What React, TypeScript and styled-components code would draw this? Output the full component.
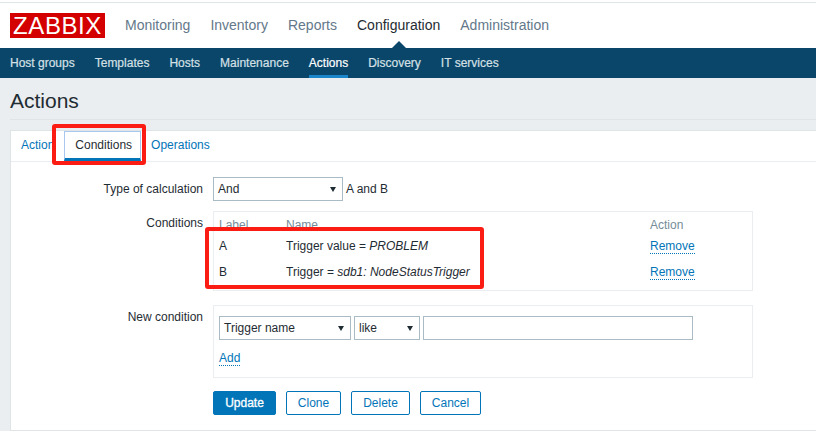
import React from 'react';
import styled, { createGlobalStyle } from 'styled-components';

const GlobalStyle = createGlobalStyle`
  html, body {
    margin: 0;
    padding: 0;
    background: #ebeef0;
    font-family: "Liberation Sans", Arial, sans-serif;
    font-size: 12px;
    color: #1f2c33;
    overflow: hidden;
  }
`;

const Page = styled.div`
  position: relative;
  width: 816px;
  height: 431px;
  overflow: hidden;
`;

const TopSpacer = styled.div`
  height: 2px;
  background: #fff;
`;

const Header = styled.header`
  height: 45px;
  background: #fff;
  border-top: 1px solid #dfe4e7;
  display: flex;
  align-items: center;
  padding-left: 10px;
`;

const Logo = styled.div`
  width: 95px;
  height: 25px;
  background: #d40000;
  color: #fff;
  font-size: 24px;
  letter-spacing: 0.6px;
  line-height: 25px;
  text-align: center;
  margin-right: 20px;
`;

const MainMenu = styled.nav`
  display: flex;
  gap: 20px;
  margin-bottom: 2px;
`;

const MainItem = styled.span<{ $active?: boolean }>`
  position: relative;
  font-size: 14px;
  color: ${(p) => (p.$active ? '#1f2c33' : '#64788a')};
  ${(p) =>
    p.$active &&
    `&::after {
      content: '';
      position: absolute;
      left: 50%;
      bottom: -15px;
      margin-left: -7px;
      border-left: 7px solid transparent;
      border-right: 7px solid transparent;
      border-bottom: 7px solid #0a466a;
    }`}
`;

const SubMenu = styled.nav`
  height: 30px;
  background: #0a466a;
  display: flex;
  gap: 20px;
  padding-left: 10px;
`;

const SubItem = styled.span<{ $active?: boolean }>`
  line-height: 30px;
  height: 30px;
  box-sizing: border-box;
  color: ${(p) => (p.$active ? '#fff' : '#d5e0e6')};
  -webkit-text-stroke: 0.2px currentColor;
  border-bottom: 3px solid ${(p) => (p.$active ? '#1a85c8' : 'transparent')};
`;

const TitleBar = styled.div`
  height: 41px;
  margin-left: 10px;
  border-bottom: 1px solid #dfe4e7;
  display: flex;
  align-items: center;
`;

const Title = styled.h1`
  margin: 4px 0 0;
  font-size: 21px;
  font-weight: 400;
  color: #1f2c33;
`;

const Card = styled.section`
  margin: 10px 0 0 10px;
  height: 301px;
  box-sizing: border-box;
  background: #fff;
  border-top: 1px solid #dfe4e7;
  border-left: 1px solid #dfe4e7;
  border-bottom: 1px solid #dfe4e7;
`;

const Tabs = styled.div`
  height: 30px;
  border-bottom: 1px solid #ebeef0;
  display: flex;
  padding-left: 10px;
  gap: 10px;
`;

const Tab = styled.span<{ $active?: boolean }>`
  box-sizing: border-box;
  height: 30px;
  line-height: 29px;
  color: ${(p) => (p.$active ? '#1f2c33' : '#0275b8')};
  ${(p) =>
    p.$active &&
    `padding: 0 8px 0 10px;
     line-height: 27px;
     border: 1px solid #a9c8f0;
     border-bottom: 3px solid #0275b8;`}
`;

const Form = styled.div`
  display: grid;
  grid-template-columns: 192px 540px;
  column-gap: 10px;
  padding-top: 15px;
`;

const FieldLabel = styled.div<{ $gap: number }>`
  text-align: right;
  line-height: 14px;
  padding-top: 5px;
  margin-bottom: ${(p) => p.$gap}px;
`;

const FieldValue = styled.div<{ $gap: number }>`
  margin-bottom: ${(p) => p.$gap}px;
`;

const InlineRow = styled.div`
  display: flex;
  align-items: center;
`;

const Note = styled.span`
  margin-left: 3px;
`;

const Select = styled.div<{ $width: number }>`
  box-sizing: border-box;
  width: ${(p) => p.$width}px;
  height: 24px;
  border: 1px solid #a9bbc4;
  background: #fff;
  padding: 0 4px;
  display: flex;
  align-items: center;
  justify-content: space-between;
`;

const Arrow = styled.span`
  border-left: 3px solid transparent;
  border-right: 3px solid transparent;
  border-top: 5px solid #1f2c33;
  margin-right: 2px;
`;

const TextInput = styled.div`
  box-sizing: border-box;
  width: 270px;
  height: 24px;
  border: 1px solid #a9bbc4;
  background: #fff;
`;

const Box = styled.div`
  box-sizing: border-box;
  border: 1px solid #ebeef0;
  padding: 0 5px;
`;

const TableBox = styled(Box)`
  height: 80px;
`;

const CondRow = styled.div<{ $head?: boolean }>`
  display: grid;
  box-sizing: border-box;
  grid-template-columns: 67px 364px 1fr;
  height: ${(p) => (p.$head ? 21 : 26)}px;
  padding-top: ${(p) => (p.$head ? 5 : 0)}px;
  align-items: center;
`;

const HeadCell = styled.span`
  color: #768d99;
`;

const LinkText = styled.span`
  color: #0275b8;
  justify-self: start;
  border-bottom: 1px dotted #0275b8;
  line-height: 13px;
`;

const RowLink = styled(LinkText)`
  margin-top: 2px;
`;

const NewBox = styled(Box)`
  height: 73px;
  padding-top: 10px;
`;

const Gapped = styled(InlineRow)`
  gap: 3px;
`;

const AddRow = styled.div`
  margin-top: 12px;
  display: flex;
`;

const Buttons = styled.div`
  display: flex;
  gap: 10px;
`;

const Button = styled.span<{ $primary?: boolean; $width: number }>`
  box-sizing: border-box;
  width: ${(p) => p.$width}px;
  height: 24px;
  line-height: 22px;
  text-align: center;
  border: 1px solid #0275b8;
  border-radius: 2px;
  background: ${(p) => (p.$primary ? '#0275b8' : '#fff')};
  color: ${(p) => (p.$primary ? '#fff' : '#0275b8')};
  ${(p) => p.$primary && '-webkit-text-stroke: 0.3px #fff;'}
`;

const Callout = styled.div<{ $x: number; $y: number; $w: number; $h: number }>`
  position: absolute;
  box-sizing: border-box;
  left: ${(p) => p.$x}px;
  top: ${(p) => p.$y}px;
  width: ${(p) => p.$w}px;
  height: ${(p) => p.$h}px;
  border: 4px solid #fb1c14;
  border-radius: 3px;
`;

const mainItems = ['Monitoring', 'Inventory', 'Reports', 'Configuration', 'Administration'];
const subItems = ['Host groups', 'Templates', 'Hosts', 'Maintenance', 'Actions', 'Discovery', 'IT services'];

export default function App() {
  return (
    <Page>
      <GlobalStyle />
      <TopSpacer />
      <Header>
        <Logo>ZABBIX</Logo>
        <MainMenu>
          {mainItems.map((m) => (
            <MainItem key={m} $active={m === 'Configuration'}>{m}</MainItem>
          ))}
        </MainMenu>
      </Header>
      <SubMenu>
        {subItems.map((s) => (
          <SubItem key={s} $active={s === 'Actions'}>{s}</SubItem>
        ))}
      </SubMenu>
      <TitleBar>
        <Title>Actions</Title>
      </TitleBar>
      <Card>
        <Tabs>
          <Tab>Action</Tab>
          <Tab $active>Conditions</Tab>
          <Tab>Operations</Tab>
        </Tabs>
        <Form>
          <FieldLabel $gap={10}>Type of calculation</FieldLabel>
          <FieldValue $gap={10}>
            <InlineRow>
              <Select $width={130}>And<Arrow /></Select>
              <Note>A and B</Note>
            </InlineRow>
          </FieldValue>

          <FieldLabel $gap={14}>Conditions</FieldLabel>
          <FieldValue $gap={14}>
            <TableBox>
              <CondRow $head>
                <HeadCell>Label</HeadCell>
                <HeadCell>Name</HeadCell>
                <HeadCell>Action</HeadCell>
              </CondRow>
              <CondRow>
                <span>A</span>
                <span>Trigger value = <em>PROBLEM</em></span>
                <RowLink>Remove</RowLink>
              </CondRow>
              <CondRow>
                <span>B</span>
                <span>Trigger = <em>sdb1: NodeStatusTrigger</em></span>
                <RowLink>Remove</RowLink>
              </CondRow>
            </TableBox>
          </FieldValue>

          <FieldLabel $gap={13}>New condition</FieldLabel>
          <FieldValue $gap={13}>
            <NewBox>
              <Gapped>
                <Select $width={132}>Trigger name<Arrow /></Select>
                <Select $width={66}>like<Arrow /></Select>
                <TextInput />
              </Gapped>
              <AddRow>
                <LinkText>Add</LinkText>
              </AddRow>
            </NewBox>
          </FieldValue>

          <span />
          <Buttons>
            <Button $primary $width={63}>Update</Button>
            <Button $width={55}>Clone</Button>
            <Button $width={59}>Delete</Button>
            <Button $width={61}>Cancel</Button>
          </Buttons>
        </Form>
      </Card>
      <Callout $x={52} $y={124} $w={94} $h={41} />
      <Callout $x={205} $y={227} $w={279} $h={62} />
    </Page>
  );
}
